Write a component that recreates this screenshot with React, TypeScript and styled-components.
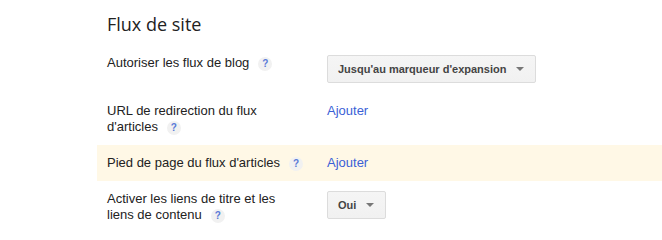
import React from 'react'
import styled, { createGlobalStyle } from 'styled-components'

const GlobalStyle = createGlobalStyle`
  html, body {
    margin: 0;
    padding: 0;
    background: #fff;
  }
  body {
    font-family: "Liberation Sans", Arial, sans-serif;
    font-size: 13px;
    color: #222;
  }
`

const Section = styled.section`
  padding-left: 97px;
  padding-top: 12px;
`

const Title = styled.h2`
  margin: 0 0 9px;
  padding-left: 10px;
  font-family: "Open Sans", "Liberation Sans", sans-serif;
  font-weight: 400;
  font-size: 18px;
  line-height: 24px;
  color: #222;
`

const Row = styled.div<{ $highlight?: boolean }>`
  display: grid;
  grid-template-columns: 197px 1fr;
  column-gap: 23px;
  align-items: start;
  padding: 10px;
  background: ${(p) => (p.$highlight ? '#fff8e6' : 'transparent')};
`

const Label = styled.div`
  line-height: 16px;
`

const Help = styled.span`
  display: inline-block;
  width: 14px;
  height: 14px;
  margin-left: 9px;
  border-radius: 50%;
  background: #f1f1f1;
  color: #5a7ad8;
  font-size: 10px;
  font-weight: bold;
  line-height: 14px;
  text-align: center;
  vertical-align: middle;
`

const Value = styled.div`
  display: flex;
  align-items: flex-start;
  line-height: 16px;
`

const Link = styled.a`
  color: #3b5fd6;
  text-decoration: none;
  cursor: pointer;
`

const Select = styled.button`
  display: inline-flex;
  align-items: center;
  gap: 10px;
  height: 28px;
  padding: 0 11px 0 10px;
  border: 1px solid #dcdcdc;
  border-radius: 2px;
  background: linear-gradient(#f5f5f5, #f1f1f1);
  font-family: "Liberation Sans", Arial, sans-serif;
  font-size: 11px;
  font-weight: bold;
  color: #444;
  cursor: pointer;
`

const Arrow = styled.span`
  width: 0;
  height: 0;
  border-left: 4px solid transparent;
  border-right: 4px solid transparent;
  border-top: 4px solid #777;
`

const HelpIcon = () => <Help>?</Help>

export default function App() {
  return (
    <>
      <GlobalStyle />
      <Section>
        <Title>Flux de site</Title>
        <Row>
          <Label>
            Autoriser les flux de blog
            <HelpIcon />
          </Label>
          <Value>
            <Select>
              Jusqu'au marqueur d'expansion
              <Arrow />
            </Select>
          </Value>
        </Row>
        <Row>
          <Label>
            URL de redirection du flux d'articles
            <HelpIcon />
          </Label>
          <Value>
            <Link>Ajouter</Link>
          </Value>
        </Row>
        <Row $highlight>
          <Label>
            Pied de page du flux d'articles
            <HelpIcon />
          </Label>
          <Value>
            <Link>Ajouter</Link>
          </Value>
        </Row>
        <Row>
          <Label>
            Activer les liens de titre et les liens de contenu
            <HelpIcon />
          </Label>
          <Value>
            <Select>
              Oui
              <Arrow />
            </Select>
          </Value>
        </Row>
      </Section>
    </>
  )
}
